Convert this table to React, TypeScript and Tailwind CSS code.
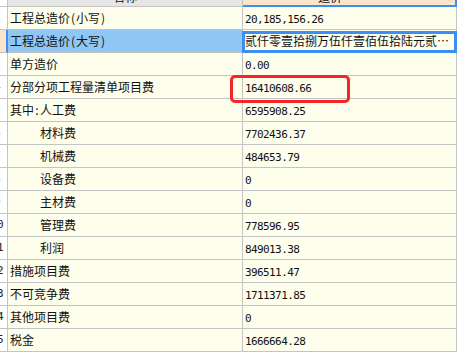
import React from "react";

type Row = {
  n: number;
  name: React.ReactNode;
  value: string;
  indent?: boolean;
  selected?: boolean;
  cjkValue?: boolean;
};

const P = ({ c }: { c: string }) => <span className="inline-block w-[6px] text-center">{c}</span>;

const rows: Row[] = [
  { n: 1, name: <>工程总造价<P c="(" />小写<P c=")" /></>, value: "20,185,156.26" },
  { n: 2, name: <>工程总造价<P c="(" />大写<P c=")" /></>, value: "贰仟零壹拾捌万伍仟壹佰伍拾陆元贰…", selected: true, cjkValue: true },
  { n: 3, name: "单方造价", value: "0.00" },
  { n: 4, name: "分部分项工程量清单项目费", value: "16410608.66" },
  { n: 5, name: <>其中<P c=":" />人工费</>, value: "6595908.25" },
  { n: 6, name: "材料费", value: "7702436.37", indent: true },
  { n: 7, name: "机械费", value: "484653.79", indent: true },
  { n: 8, name: "设备费", value: "0", indent: true },
  { n: 9, name: "主材费", value: "0", indent: true },
  { n: 10, name: "管理费", value: "778596.95", indent: true },
  { n: 11, name: "利润", value: "849013.38", indent: true },
  { n: 12, name: "措施项目费", value: "396511.47" },
  { n: 13, name: "不可竞争费", value: "1711371.85" },
  { n: 14, name: "其他项目费", value: "0" },
  { n: 15, name: "税金", value: "1666664.28" },
];

export default function App() {
  return (
    <div className="relative w-[463px] h-[354px] overflow-hidden bg-white text-[#111] font-['Noto_Sans_CJK_SC',sans-serif] text-[12px]">
      {/* header */}
      <div className="flex h-[7px]">
        <div className="w-[8px] h-full shrink-0 bg-white border-r border-b border-[#c4c4c4]" />
        <div className="w-[235px] h-full shrink-0 overflow-hidden bg-[#e6e6e6] border-r border-b border-[#c4c4c4]">
          <div className="mt-[-15px] h-[23px] flex items-center justify-center leading-[23px]">名称</div>
        </div>
        <div className="w-[214px] h-full shrink-0 overflow-hidden bg-[#fde5cc] border-r-2 border-b-2 border-[#3d8ef2]">
          <div className="mt-[-15px] h-[23px] flex items-center pl-[75px] leading-[23px]">造价</div>
        </div>
        <div className="flex-1 h-full bg-white" />
      </div>

      {rows.map((r) => (
        <div key={r.n} className="flex h-[23px]">
          <div
            className={`w-[8px] shrink-0 overflow-hidden border-b border-[#c4c4c4] ${
              r.selected ? "bg-[#fde4c8] border-r-2 border-r-[#3d8ef2]" : "bg-white border-r"
            }`}
          >
            <div className="ml-[-13px] w-[20px] text-center leading-[22px] text-[11px] tracking-[-0.6px] font-['DejaVu_Sans_Mono',monospace] text-[#222]">
              {r.n}
            </div>
          </div>
          <div
            className={`w-[235px] shrink-0 overflow-hidden whitespace-nowrap border-r border-b border-[#c4c4c4] leading-[22px] ${
              r.indent ? "pl-[32px]" : "pl-[2px]"
            } ${r.selected ? "bg-[#90c6f4]" : "bg-[#fefeec]"}`}
          >
            {r.name}
          </div>
          <div className="relative w-[214px] shrink-0 whitespace-nowrap border-r border-b border-[#c4c4c4] bg-[#fefeec] pl-[2px] leading-[22px]">
            {r.cjkValue ? (
              <span className="block overflow-hidden">{r.value}</span>
            ) : (
              <span className="text-[11px] tracking-[-0.6px] font-['DejaVu_Sans_Mono',monospace]">{r.value}</span>
            )}
            {r.selected && (
              <div className="absolute left-[-1px] top-[1px] right-[-1px] bottom-[-1px] border-[3px] border-[#3d8ef2]" />
            )}
          </div>
          <div className="flex-1 bg-white" />
        </div>
      ))}

      {/* red annotation box */}
      <div className="absolute left-[230px] top-[75px] w-[120px] h-[28px] rounded-[5px] border-[3px] border-[#f52626]" />
    </div>
  );
}
